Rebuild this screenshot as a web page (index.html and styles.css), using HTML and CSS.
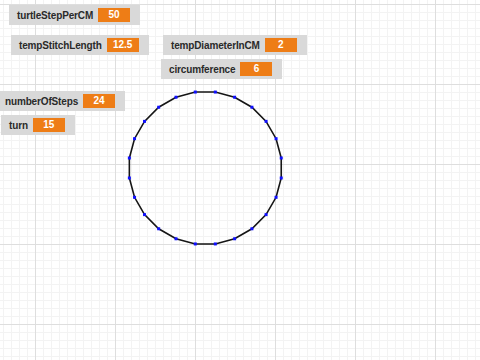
FILE: index.html
```html
<!DOCTYPE html>
<html lang="en">

<head>
    <meta charset="UTF-8">
    <meta name="viewport" content="width=device-width, initial-scale=1.0">
    <title>Stage</title>
    <link rel="stylesheet" href="styles.css">
</head>

<body>

    <div id="stage">
        <svg id="pen" width="480" height="360" viewBox="0 0 480 360">
            <polygon id="shape" points=""></polygon>
            <g id="dots"></g>
        </svg>

        <div class="monitor" id="mon-step">
            <span class="label">turtleStepPerCM</span><span class="value">50</span>
        </div>
        <div class="monitor" id="mon-stitch">
            <span class="label">tempStitchLength</span><span class="value">12.5</span>
        </div>
        <div class="monitor" id="mon-diameter">
            <span class="label">tempDiameterInCM</span><span class="value">2</span>
        </div>
        <div class="monitor" id="mon-circ">
            <span class="label">circumference</span><span class="value">6</span>
        </div>
        <div class="monitor" id="mon-steps">
            <span class="label">numberOfSteps</span><span class="value">24</span>
        </div>
        <div class="monitor" id="mon-turn">
            <span class="label">turn</span><span class="value">15</span>
        </div>
    </div>

    <script>
        // draw the polygon the turtle left behind
        const steps = 24;
        const cx = 205.3, cy = 168, r = 76.6;
        const pts = [];
        let dots = "";
        for (let i = 0; i < steps; i++) {
            const a = (7.5 + i * 360 / steps) * Math.PI / 180;
            const x = (cx + r * Math.cos(a)).toFixed(2);
            const y = (cy - r * Math.sin(a)).toFixed(2);
            pts.push(x + "," + y);
            dots += `<rect class="dot" x="${x - 1.5}" y="${y - 1.5}" width="3" height="3"></rect>`;
        }
        document.getElementById("shape").setAttribute("points", pts.join(" "));
        document.getElementById("dots").innerHTML = dots;
    </script>

</body>

</html>
```

FILE: styles.css
```css
body {
    margin: 0;
    padding: 0;
    font-family: "Liberation Sans", Arial, sans-serif;
}

#stage {
    position: relative;
    width: 480px;
    height: 360px;
    overflow: hidden;
    background-color: #fff;
    background-image:
        linear-gradient(to right, #dedede 1px, transparent 1px),
        linear-gradient(to bottom, #dedede 1px, transparent 1px),
        linear-gradient(to right, #f3f3f3 1px, transparent 1px),
        linear-gradient(to bottom, #f3f3f3 1px, transparent 1px);
    background-size: 80px 80px, 80px 80px, 8px 8px, 8px 8px;
    background-position: 35px 4px, 35px 4px, 3px 4px, 3px 4px;
}

#pen {
    position: absolute;
    top: 0;
    left: 0;
}

#shape {
    fill: none;
    stroke: #151515;
    stroke-width: 1.6;
}

.dot {
    fill: #1010ff;
}

.monitor {
    position: absolute;
    display: flex;
    align-items: center;
    gap: 5px;
    padding: 3px 10px 3px 8px;
    background-color: #d9d9d9;
    font-size: 10px;
    font-weight: bold;
}

.label {
    color: #2a2a2a;
    letter-spacing: -0.15px;
}

.value {
    width: 32px;
    height: 14px;
    line-height: 14px;
    text-align: center;
    color: #fff;
    background-color: #ee7d16;
}

#mon-step {
    top: 5px;
    left: 9px;
}

#mon-stitch {
    top: 35px;
    left: 11px;
}

#mon-diameter {
    top: 35px;
    left: 163px;
}

#mon-circ {
    top: 59px;
    left: 161px;
}

#mon-steps {
    top: 91px;
    left: -3px;
}

#mon-turn {
    top: 115px;
    left: 1px;
}
```
